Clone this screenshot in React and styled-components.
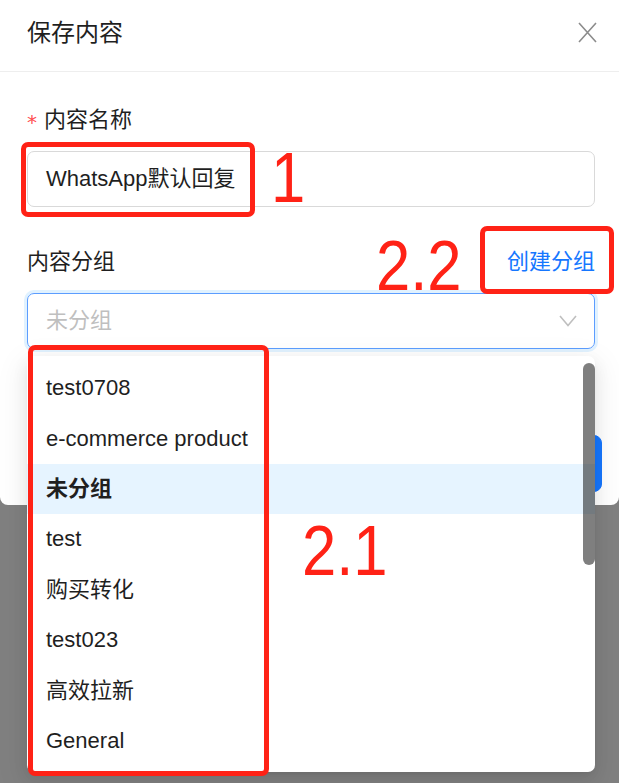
import React from "react";
import styled, { createGlobalStyle } from "styled-components";

const GlobalStyle = createGlobalStyle`
  html, body {
    margin: 0;
    padding: 0;
    overflow: hidden;
  }
  body {
    font-family: "Liberation Sans", "Noto Sans CJK SC", sans-serif;
    line-height: 26px;
    color: #1f1f1f;
  }
`;

const Page = styled.div`
  position: relative;
  width: 619px;
  height: 783px;
  background: #808080;
  overflow: hidden;
`;

const Modal = styled.div`
  display: flex;
  flex-direction: column;
  width: 100%;
  height: 505px;
  background: #fff;
  border-radius: 0 0 8px 8px;
`;

const Header = styled.div`
  display: flex;
  align-items: center;
  justify-content: space-between;
  height: 71px;
  padding: 0 22px 0 27px;
  border-bottom: 1px solid #eeeeee;
`;

const Title = styled.div`
  font-size: 24px;
  color: #1f1f1f;
  margin-top: -6px;
`;

const CloseButton = styled.button`
  border: none;
  background: transparent;
  padding: 0;
  display: flex;
  margin-top: -7px;
  cursor: pointer;
`;

const Body = styled.div`
  position: relative;
  padding: 33px 24px 0 27px;
`;

const Label = styled.div`
  display: flex;
  align-items: center;
  height: 30px;
  font-size: 22px;
  color: #1f1f1f;
`;

const Required = styled.span`
  color: #ff4d4f;
  font-size: 20px;
  margin-right: 7px;
  margin-top: 4px;
  font-family: "DejaVu Sans", sans-serif;
`;

const Input = styled.div`
  display: flex;
  align-items: center;
  height: 56px;
  box-sizing: border-box;
  margin-top: 16px;
  padding: 0 18px;
  border: 1px solid #d9d9d9;
  border-radius: 7px;
  font-size: 22px;
  color: #1f1f1f;
`;

const LabelRow = styled.div`
  display: flex;
  align-items: center;
  justify-content: space-between;
  height: 30px;
  margin-top: 40px;
`;

const LinkText = styled.span`
  font-size: 22px;
  color: #1677ff;
`;

const Select = styled.div`
  display: flex;
  align-items: center;
  justify-content: space-between;
  height: 56px;
  box-sizing: border-box;
  margin-top: 16px;
  padding: 0 17px 0 18px;
  border: 1px solid #5c9dff;
  border-radius: 7px;
  box-shadow: 0 0 0 3px rgba(5, 145, 255, 0.12);
  font-size: 22px;
`;

const Placeholder = styled.span`
  color: #bfbfbf;
`;

const Footer = styled.div`
  display: flex;
  justify-content: flex-end;
  gap: 12px;
  margin-top: auto;
  padding: 0 17px 13px;
`;

const Button = styled.button`
  height: 57px;
  padding: 0 28px;
  font-size: 22px;
  font-family: inherit;
  border-radius: 8px;
  border: 1px solid ${(p) => (p.$primary ? "#1677ff" : "#d9d9d9")};
  background: ${(p) => (p.$primary ? "#1677ff" : "#fff")};
  color: ${(p) => (p.$primary ? "#fff" : "#1f1f1f")};
`;

const Dropdown = styled.div`
  position: absolute;
  top: 356px;
  left: 27px;
  width: 568px;
  height: 416px;
  box-sizing: border-box;
  padding-top: 7px;
  background: #fff;
  border-radius: 7px;
  overflow: hidden;
  box-shadow: 0 6px 16px 0 rgba(0, 0, 0, 0.08), 0 3px 6px -4px rgba(0, 0, 0, 0.12),
    0 9px 28px 8px rgba(0, 0, 0, 0.05);
`;

const Option = styled.div`
  display: flex;
  align-items: center;
  height: 50.4px;
  padding-left: 19px;
  font-size: 22px;
  color: #1f1f1f;
  font-weight: ${(p) => (p.$selected ? 700 : 400)};
  background: ${(p) => (p.$selected ? "#e6f4ff" : "transparent")};
`;

const ScrollThumb = styled.div`
  position: absolute;
  top: 7px;
  right: 0;
  width: 12px;
  height: 202px;
  border-radius: 6px;
  background: rgba(0, 0, 0, 0.5);
`;

const MarkBox = styled.div`
  position: absolute;
  top: ${(p) => p.$top}px;
  left: ${(p) => p.$left}px;
  width: ${(p) => p.$width}px;
  height: ${(p) => p.$height}px;
  box-sizing: border-box;
  border: 5px solid #ff2216;
  border-radius: 7px;
  pointer-events: none;
`;

const MarkNumber = styled.div`
  position: absolute;
  top: ${(p) => p.$top}px;
  left: ${(p) => p.$left}px;
  font-family: "Liberation Sans", sans-serif;
  font-size: 70px;
  line-height: 1;
  color: #ff2216;
  transform: scaleX(0.88);
  transform-origin: left top;
  pointer-events: none;
`;

const groups = [
  "test0708",
  "e-commerce product",
  "未分组",
  "test",
  "购买转化",
  "test023",
  "高效拉新",
  "General",
];

const CloseIcon = () => (
  <svg width="19" height="21" viewBox="0 0 19 21">
    <path d="M1 1 L18 20 M18 1 L1 20" stroke="#8c8c8c" strokeWidth="1.6" fill="none" />
  </svg>
);

const ChevronDown = () => (
  <svg width="18" height="12" viewBox="0 0 18 12">
    <path d="M1 1 L9 10.5 L17 1" stroke="#bfbfbf" strokeWidth="1.6" fill="none" />
  </svg>
);

const App = () => {
  return (
    <Page>
      <GlobalStyle />
      <Modal>
        <Header>
          <Title>保存内容</Title>
          <CloseButton>
            <CloseIcon />
          </CloseButton>
        </Header>
        <Body>
          <Label>
            <Required>*</Required>内容名称
          </Label>
          <Input>WhatsApp默认回复</Input>
          <LabelRow>
            <Label>内容分组</Label>
            <LinkText>创建分组</LinkText>
          </LabelRow>
          <Select>
            <Placeholder>未分组</Placeholder>
            <ChevronDown />
          </Select>
        </Body>
        <Footer>
          <Button>取消</Button>
          <Button $primary>保存</Button>
        </Footer>
      </Modal>

      <Dropdown>
        {groups.map((g) => (
          <Option key={g} $selected={g === "未分组"}>
            {g}
          </Option>
        ))}
        <ScrollThumb />
      </Dropdown>

      <MarkBox $top={142} $left={21} $width={234} $height={75} />
      <MarkNumber $top={143} $left={271}>1</MarkNumber>
      <MarkBox $top={226} $left={480} $width={134} $height={68} />
      <MarkNumber $top={231} $left={376}>2.2</MarkNumber>
      <MarkBox $top={345} $left={28} $width={241} $height={431} />
      <MarkNumber $top={516} $left={302}>2.1</MarkNumber>
    </Page>
  );
};

export default App;
